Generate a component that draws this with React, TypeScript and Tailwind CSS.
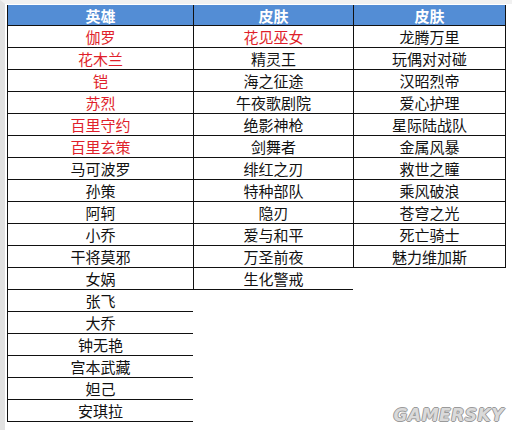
const heroes: { name: string; red?: boolean }[] = [
  { name: '伽罗', red: true },
  { name: '花木兰', red: true },
  { name: '铠', red: true },
  { name: '苏烈', red: true },
  { name: '百里守约', red: true },
  { name: '百里玄策', red: true },
  { name: '马可波罗' },
  { name: '孙策' },
  { name: '阿轲' },
  { name: '小乔' },
  { name: '干将莫邪' },
  { name: '女娲' },
  { name: '张飞' },
  { name: '大乔' },
  { name: '钟无艳' },
  { name: '宫本武藏' },
  { name: '妲己' },
  { name: '安琪拉' },
];

const skinsA: { name: string; red?: boolean }[] = [
  { name: '花见巫女', red: true },
  { name: '精灵王' },
  { name: '海之征途' },
  { name: '午夜歌剧院' },
  { name: '绝影神枪' },
  { name: '剑舞者' },
  { name: '绯红之刃' },
  { name: '特种部队' },
  { name: '隐刃' },
  { name: '爱与和平' },
  { name: '万圣前夜' },
  { name: '生化警戒' },
];

const skinsB: { name: string; red?: boolean }[] = [
  { name: '龙腾万里' },
  { name: '玩偶对对碰' },
  { name: '汉昭烈帝' },
  { name: '爱心护理' },
  { name: '星际陆战队' },
  { name: '金属风暴' },
  { name: '救世之瞳' },
  { name: '乘风破浪' },
  { name: '苍穹之光' },
  { name: '死亡骑士' },
  { name: '魅力维加斯' },
];

function Column({ title, rows, className }: { title: string; rows: { name: string; red?: boolean }[]; className: string }) {
  return (
    <div className={`flex flex-col border-l border-[#111] ${className}`}>
      <div className="flex h-[21px] items-center justify-center border-b border-[#111] bg-[#538dd5] text-[15px] font-bold leading-none text-white">
        {title}
      </div>
      {rows.map((r) => (
        <div
          key={r.name}
          className={`flex h-[22px] items-center justify-center border-b border-[#111] text-[15px] leading-none ${r.red ? 'text-[#e01f2b]' : 'text-[#111]'}`}
        >
          {r.name}
        </div>
      ))}
    </div>
  );
}

export default function App() {
  return (
    <div
      className="relative h-[430px] w-[512px] overflow-hidden border-l-[5px] border-t-[4px] border-l-[#e2e2e2] border-t-[#f1f1f1] bg-white pl-[2px] pt-[1px]"
      style={{ fontFamily: '"Microsoft YaHei", "Noto Sans CJK SC", sans-serif' }}
    >
      <div className="flex items-start">
        <Column title="英雄" rows={heroes} className="w-[186px]" />
        <Column title="皮肤" rows={skinsA} className="w-[160px]" />
        <Column title="皮肤" rows={skinsB} className="w-[153px] border-r" />
      </div>
      {/* watermark */}
      <div
        className="absolute bottom-[6px] right-[8px] text-[17px] font-black italic leading-none tracking-[0.5px] text-[#dadada]"
        style={{
          fontFamily: '"DejaVu Sans", sans-serif',
          textShadow: '1px 0 0 #9a9a9a, -1px 0 0 #9a9a9a, 0 1px 0 #9a9a9a, 0 -1px 0 #9a9a9a',
        }}
      >
        GAMERSKY
      </div>
    </div>
  );
}
